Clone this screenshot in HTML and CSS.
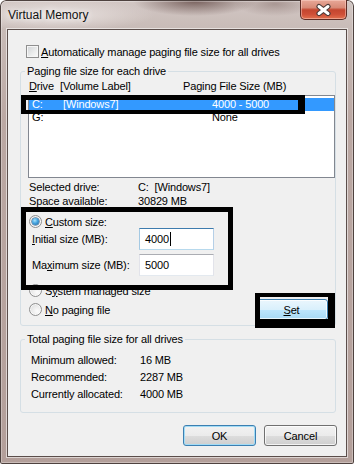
FILE: index.html
```html
<!DOCTYPE html>
<html>
<head>
<meta charset="utf-8">
<title>Virtual Memory</title>
<link rel="stylesheet" href="styles.css">
</head>
<body>
<div class="window">
  <div class="titlebar">
    <span class="title">Virtual Memory</span>
    <div class="close">
      <svg width="17" height="14" viewBox="0 0 17 14">
        <path d="M4 3.5 L13 10.5 M13 3.5 L4 10.5" stroke="#4a3a38" stroke-width="5.2" stroke-linecap="round" fill="none"/>
        <path d="M4 3.5 L13 10.5 M13 3.5 L4 10.5" stroke="#ffffff" stroke-width="3" stroke-linecap="round" fill="none"/>
      </svg>
    </div>
  </div>
  <div class="client">
    <div class="check-row">
      <span class="checkbox"></span>
      <span><u>A</u>utomatically manage paging file size for all drives</span>
    </div>

    <fieldset class="group group-drives">
      <legend>Paging file size for each drive</legend>
      <div class="cols">
        <span class="h1"><u>D</u>rive</span>
        <span class="h2">[Volume Label]</span>
        <span>Paging File Size (MB)</span>
      </div>
      <div class="listbox">
        <div class="row selected"><span class="c1">C:</span><span class="c2">[Windows7]</span><span>4000 - 5000</span></div>
        <div class="row"><span class="c1">G:</span><span class="c2"></span><span>None</span></div>
      </div>
      <div class="info">
        <span>Selected drive:</span><span>C:&nbsp; [Windows7]</span>
        <span>Space available:</span><span>30829 MB</span>
      </div>
      <div class="radio-row first">
        <span class="radio checked"></span>
        <span><u>C</u>ustom size:</span>
      </div>
      <div class="field-row">
        <span class="field-label"><u>I</u>nitial size (MB):</span>
        <div class="textbox focused">4000<span class="caret"></span></div>
      </div>
      <div class="field-row second">
        <span class="field-label">Ma<u>x</u>imum size (MB):</span>
        <div class="textbox">5000</div>
      </div>
      <div class="radio-row system">
        <span class="radio"></span>
        <span>S<u>y</u>stem managed size</span>
      </div>
      <div class="last-row">
        <div class="radio-row">
          <span class="radio"></span>
          <span><u>N</u>o paging file</span>
        </div>
        <button class="btn btn-hot"><u>S</u>et</button>
      </div>
    </fieldset>

    <fieldset class="group group-total">
      <legend>Total paging file size for all drives</legend>
      <div class="totals">
        <span>Minimum allowed:</span><span>16 MB</span>
        <span>Recommended:</span><span>2287 MB</span>
        <span>Currently allocated:</span><span>4000 MB</span>
      </div>
    </fieldset>

    <div class="buttons">
      <button class="btn btn-default">OK</button>
      <button class="btn">Cancel</button>
    </div>
  </div>

  <div class="mark mark-row"></div>
  <div class="mark mark-custom"></div>
  <div class="mark mark-set"></div>
</div>
</body>
</html>
```

FILE: styles.css
```css
* { box-sizing: border-box; }

html, body {
  margin: 0;
  padding: 0;
}

body {
  width: 354px;
  height: 464px;
  overflow: hidden;
  background: #ffffff;
  font-family: "Liberation Sans", Arial, sans-serif;
  font-size: 11px;
  letter-spacing: -0.15px;
  color: #000;
}

u { text-decoration: underline; text-underline-offset: 1px; }

.window {
  position: relative;
  width: 354px;
  height: 464px;
  padding: 0 7px 7px 7px;
  display: flex;
  flex-direction: column;
  border-radius: 6px 6px 2px 2px;
  background:
    radial-gradient(ellipse 62px 15px at 195px 1px, rgba(98, 72, 68, 0.8), rgba(98, 72, 68, 0) 100%),
    radial-gradient(ellipse 40px 12px at 275px 4px, rgba(120, 95, 90, 0.45), rgba(120, 95, 90, 0) 100%),
    radial-gradient(ellipse 100px 16px at 55px 15px, rgba(238, 232, 230, 0.85), rgba(238, 232, 230, 0) 100%),
    linear-gradient(180deg, #d2c7c4 0px, #c8bbb7 29px, #bba8a3 120px, #b39f9a 100%);
  box-shadow: inset 0 0 0 1px #4e423f, inset 0 0 0 2px rgba(255, 255, 255, 0.3);
}

.titlebar {
  flex: none;
  height: 29px;
  display: flex;
  justify-content: space-between;
  align-items: flex-start;
  padding-left: 1px;
}

.title {
  margin-top: 8px;
  font-size: 12px;
  line-height: 14px;
  letter-spacing: 0;
  color: #111;
  text-shadow: 0 0 6px rgba(255, 255, 255, 0.9), 0 0 10px rgba(255, 255, 255, 0.7);
}

.close {
  width: 47px;
  height: 20px;
  display: flex;
  align-items: center;
  justify-content: center;
  border: 1px solid #5e2c25;
  border-top: none;
  border-radius: 0 0 5px 5px;
  background: linear-gradient(180deg, #e8a898 0%, #d88a77 40%, #c4462f 52%, #cf4f37 75%, #e2714f 100%);
  box-shadow: inset 0 0 0 1px rgba(255, 220, 210, 0.45);
}

.close svg { display: block; }

.client {
  flex: none;
  width: 340px;
  height: 428px;
  border: 1px solid #5b4e4b;
  background: #f0f0f0;
  box-shadow: 0 0 0 1px rgba(255, 255, 255, 0.55);
  display: flex;
  flex-direction: column;
}

.check-row {
  display: flex;
  align-items: center;
  gap: 2px;
  height: 13px;
  margin: 15px 0 0 18px;
  line-height: 14px;
}

.checkbox {
  width: 13px;
  height: 13px;
  flex: none;
  border: 1px solid #8f8f8f;
  background: linear-gradient(135deg, #cfd2d5 0%, #eceded 60%, #fbfbfb 100%);
  box-shadow: inset 0 0 0 1px #f6f6f6;
}

.group {
  margin: 6px 0 0 12px;
  width: 316px;
  min-width: 0;
  border: 1px solid #d5dfe5;
  border-radius: 3px;
  padding: 1px 0 5px 0;
}

.group legend {
  margin-left: 4px;
  padding: 0 2px;
  line-height: 14px;
  height: 14px;
}

.cols {
  display: flex;
  height: 14px;
  line-height: 14px;
  padding-left: 8px;
}

.cols .h1 { width: 31px; }
.cols .h2 { width: 123px; }

.listbox {
  margin: 2px 0 0 7px;
  width: 307px;
  height: 83px;
  border: 1px solid #828790;
  background: #fff;
  padding-top: 2px;
}

.row {
  display: flex;
  height: 13px;
  line-height: 13px;
  padding-left: 3px;
}

.row .c1 { width: 31px; }
.row .c2 { width: 149px; }

.row.selected {
  background: #3399ff;
  color: #fff;
}

.info {
  display: grid;
  grid-template-columns: 109px auto;
  margin-top: 2px;
  padding-left: 8px;
  line-height: 14px;
}

.radio-row {
  display: flex;
  align-items: center;
  gap: 3px;
  height: 13px;
  margin-left: 8px;
  line-height: 14px;
}

.radio-row.first { margin-top: 7px; }
.radio-row.system { margin-top: 8px; }

.radio {
  width: 13px;
  height: 13px;
  flex: none;
  border-radius: 50%;
  border: 1px solid #8f8f8f;
  background: radial-gradient(circle at 65% 65%, #fcfcfc 0%, #e8e8e8 55%, #cfd1d3 100%);
  box-shadow: inset 0 0 0 1px rgba(255, 255, 255, 0.7);
  position: relative;
}

.radio.checked::after {
  content: "";
  position: absolute;
  left: 2px;
  top: 2px;
  width: 7px;
  height: 7px;
  border-radius: 50%;
  background: radial-gradient(circle at 40% 35%, #a9e3fb 0%, #45a4e0 45%, #1d5f97 100%);
  box-shadow: 0 0 0 0.5px #234f7a;
}

.field-row {
  display: flex;
  align-items: center;
  height: 22px;
  margin-left: 11px;
}

.field-row.second { margin-top: 4px; }

.field-label { width: 107px; }

.textbox {
  width: 75px;
  height: 22px;
  background: #fff;
  border: 1px solid;
  border-color: #abadb3 #e2e3ea #e3e9ef #e2e3ea;
  padding-left: 5px;
  display: flex;
  align-items: center;
  font-size: 11px;
}

.textbox.focused {
  border-color: #3d7bad #b5cfe7 #b7d9ed #a4c9e3;
}

.caret {
  display: inline-block;
  width: 1px;
  height: 14px;
  margin-left: 1px;
  background: #000;
}

.last-row {
  display: flex;
  align-items: center;
  justify-content: space-between;
  height: 21px;
  margin-top: 2px;
  padding-right: 7px;
}

.btn {
  width: 73px;
  height: 21px;
  padding: 0;
  font: inherit;
  letter-spacing: inherit;
  color: #000;
  border: 1px solid #707070;
  border-radius: 3px;
  background: linear-gradient(180deg, #f2f2f2 0%, #ebebeb 50%, #dddddd 51%, #cfcfcf 100%);
  box-shadow: inset 0 0 0 1px rgba(255, 255, 255, 0.75);
}

.btn-hot {
  border-color: #3c7fb1;
  background: linear-gradient(180deg, #eaf6fd 0%, #d9f0fc 50%, #bee6fd 51%, #a7d9f5 100%);
}

.btn-default {
  border-color: #3c7fb1;
  box-shadow: inset 0 0 0 1px #a2dcf6;
}

.group-total {
  margin-top: 6px;
  padding: 5px 0 10px 0;
}

.totals {
  display: grid;
  grid-template-columns: 109px auto;
  grid-auto-rows: 17px;
  align-items: center;
  padding-left: 10px;
}

.buttons {
  display: flex;
  justify-content: flex-end;
  gap: 8px;
  margin-top: 12px;
  padding-right: 9px;
}

.mark {
  position: absolute;
  border-style: solid;
  border-color: #000;
}

.mark-row {
  left: 21px;
  top: 95px;
  width: 284px;
  height: 19px;
  border-width: 5px 7px 4px 5px;
}

.mark-custom {
  left: 21px;
  top: 207px;
  width: 212px;
  height: 83px;
  border-width: 5px;
}

.mark-set {
  left: 255px;
  top: 293px;
  width: 80px;
  height: 35px;
  border-width: 4px 7px 9px 5px;
}
```
